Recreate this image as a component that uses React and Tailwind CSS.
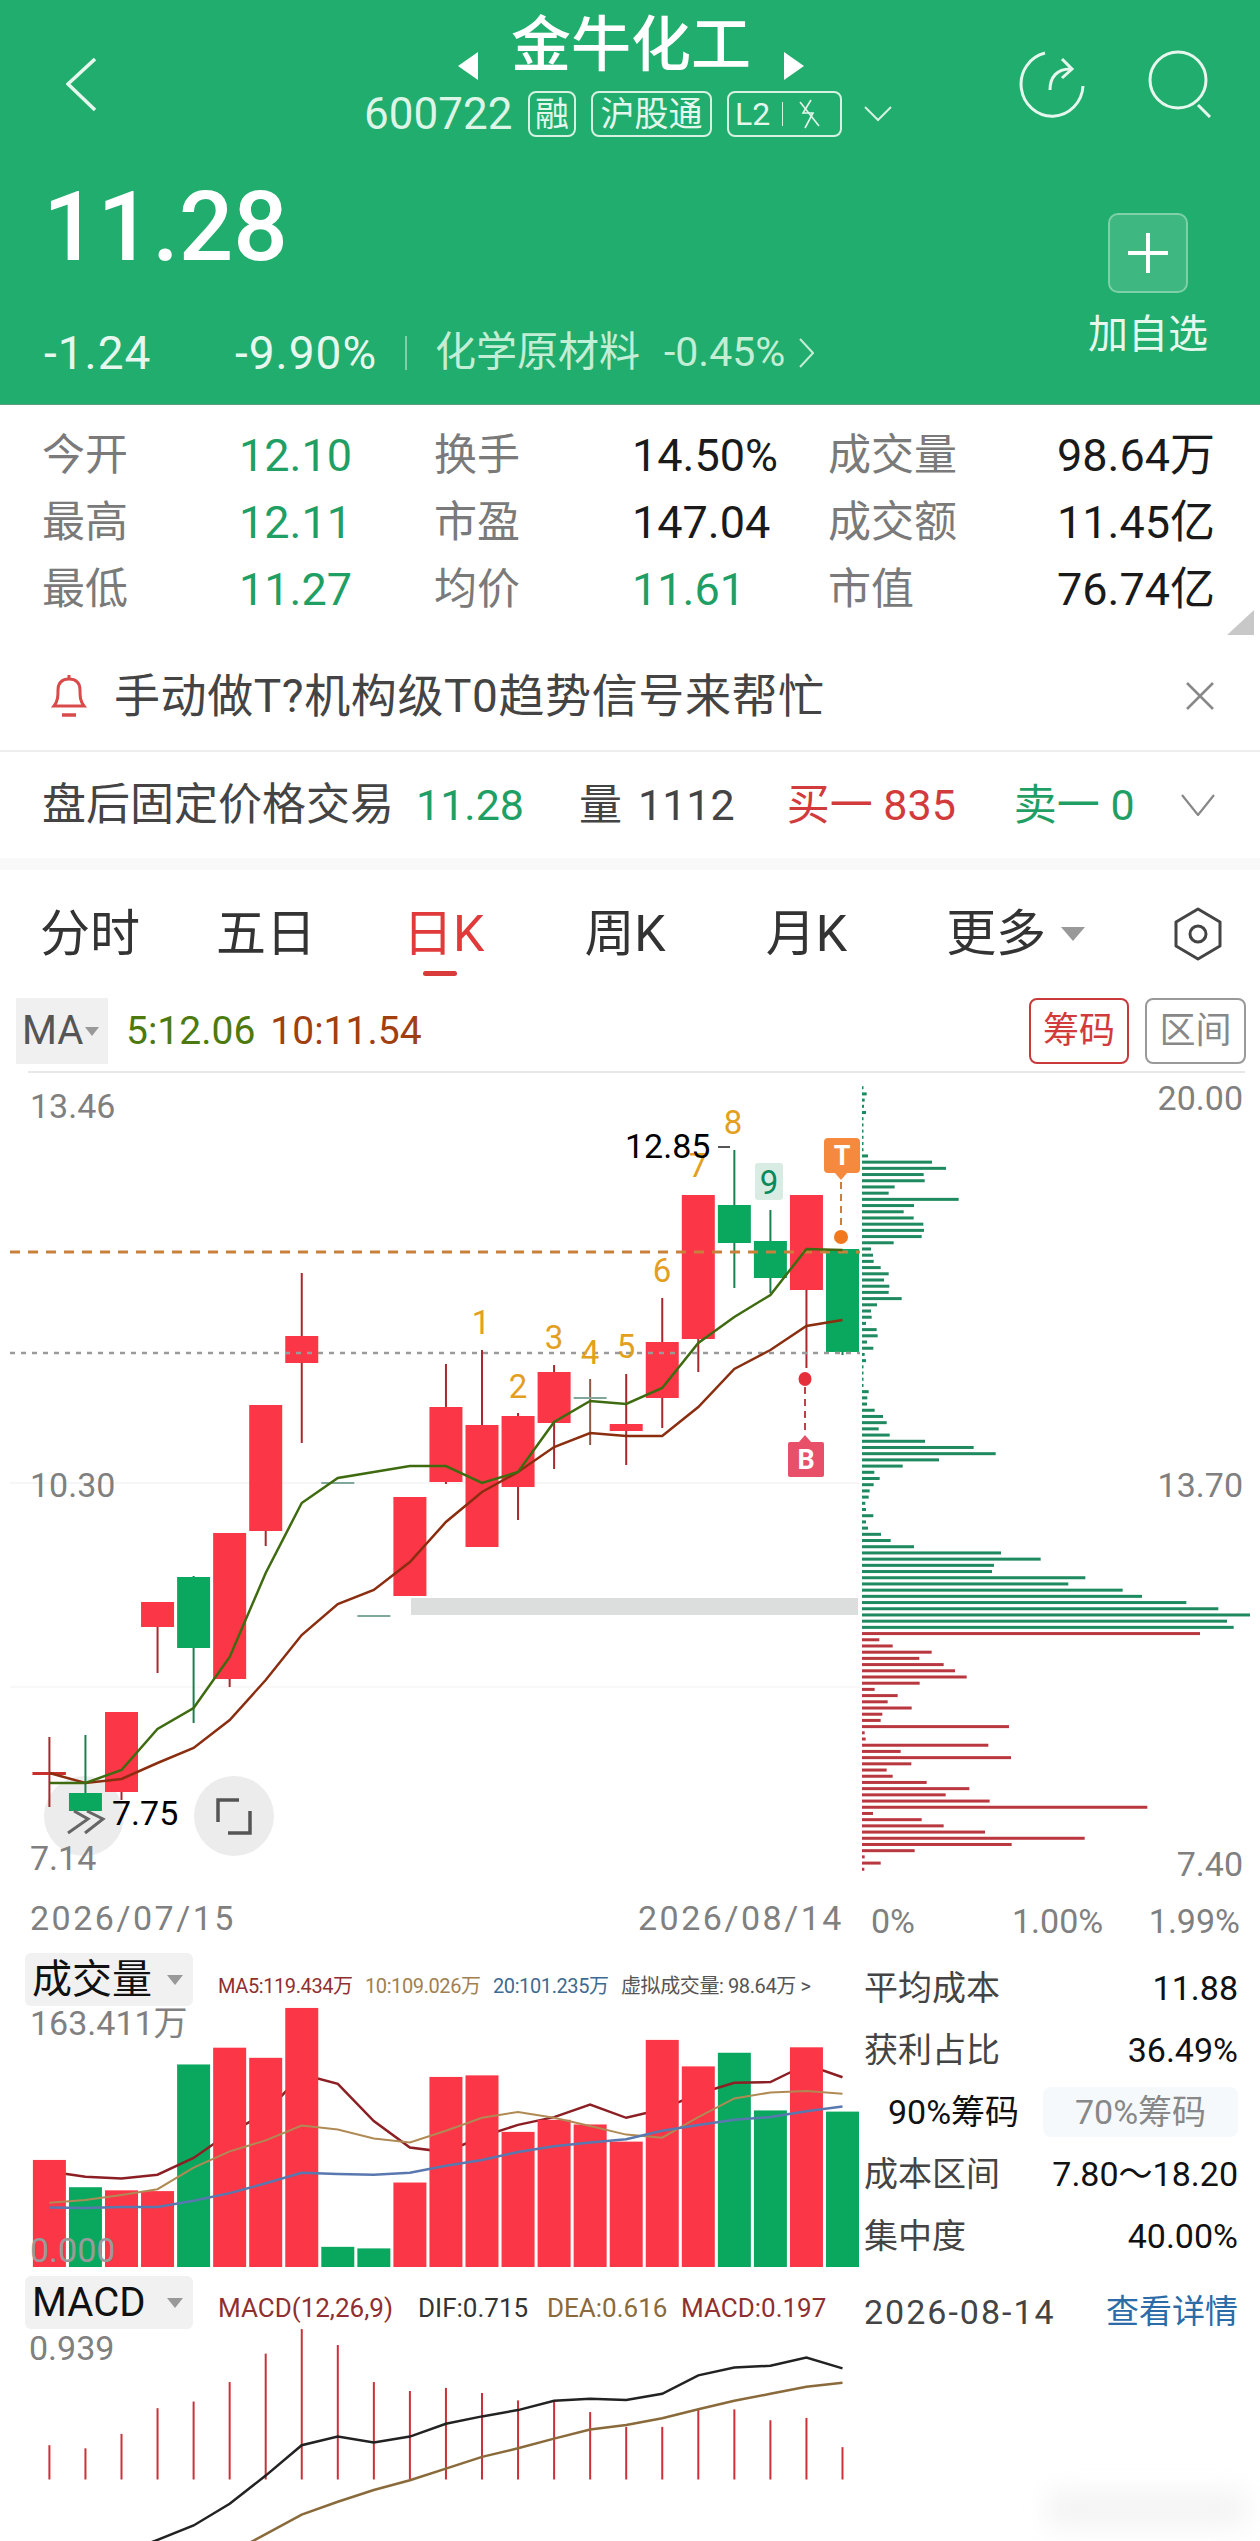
const RED = '#fb3647'
const GREEN = '#0aa85f'
const slotX = (i) => 49.4 + 36.05 * i
const line = (ys, start = 0) => ys.map((y, i) => `${slotX(i + start).toFixed(1)},${y.toFixed(1)}`).join(' ')

// [bodyTop, bodyBottom, wickTop, wickBottom, colour]
const candles = [
  [1772, 1775, 1737, 1807, 'r'],
  [1793, 1811, 1735, 1793, 'g'],
  [1712, 1792, 1712, 1800, 'r'],
  [1602, 1627, 1602, 1673, 'r'],
  [1577, 1648, 1576, 1723, 'g'],
  [1533, 1679, 1533, 1687, 'r'],
  [1405, 1531, 1405, 1546, 'r'],
  [1336, 1363, 1273, 1443, 'r'],
  [1482, 1484, 1482, 1484, 'd'],
  [1615, 1617, 1615, 1617, 'd'],
  [1497, 1596, 1497, 1596, 'r'],
  [1407, 1482, 1364, 1484, 'r'],
  [1425, 1547, 1350, 1547, 'r'],
  [1416, 1487, 1413, 1520, 'r'],
  [1372, 1423, 1365, 1469, 'r'],
  [1397, 1399, 1379, 1445, 'd'],
  [1424, 1431, 1374, 1465, 'r'],
  [1342, 1398, 1298, 1428, 'r'],
  [1195, 1339, 1195, 1372, 'r'],
  [1205, 1243, 1150, 1288, 'g'],
  [1241, 1278, 1210, 1293, 'g'],
  [1195, 1290, 1195, 1368, 'r'],
  [1249, 1352, 1249, 1355, 'g'],
]

const ma5 = [1783, 1783, 1770, 1729, 1708, 1657, 1573, 1503, 1478, 1472, 1466, 1466, 1483, 1472, 1422, 1401, 1404, 1388, 1343, 1317, 1295, 1249, 1250]
const ma10 = [1773, 1783, 1779, 1763, 1748, 1720, 1680, 1635, 1604, 1590, 1562, 1522, 1492, 1472, 1447, 1433, 1436, 1436, 1407, 1369, 1350, 1326, 1320]

// bar lengths of the chip distribution, top to bottom
const chipsGreen = [3, 14, 8, 6, 12, 3, 3, 3, 3, 3, 3, 18, 210, 252, 185, 188, 98, 80, 290, 156, 125, 155, 184, 186, 179, 95, 27, 33, 35, 56, 80, 66, 82, 80, 119, 45, 27, 29, 12, 44, 47, 15, 34, 8, 12, 3, 3, 3, 3, 20, 16, 15, 38, 63, 74, 50, 83, 189, 335, 401, 231, 122, 37, 53, 35, 23, 20, 10, 12, 34, 12, 18, 57, 86, 156, 417, 536, 396, 390, 670, 619, 782, 840, 973, 1069, 1164, 1095, 1115]
const chipsRed = [1014, 52, 92, 209, 172, 245, 279, 314, 173, 38, 107, 77, 149, 61, 56, 441, 8, 11, 379, 116, 447, 148, 74, 92, 194, 322, 251, 383, 856, 33, 179, 245, 369, 668, 449, 158, 8, 56, 7]

// volume panel, read off the picture
const volY = (z) => 1930 + z / 2.566
const volBars = [
  [590, 'r'], [660, 'g'], [668, 'r'], [670, 'r'], [345, 'g'], [302, 'r'], [328, 'r'], [200, 'r'],
  [813, 'g'], [817, 'g'], [648, 'r'], [377, 'r'], [373, 'r'], [518, 'r'], [487, 'r'], [499, 'r'],
  [543, 'r'], [282, 'r'], [350, 'r'], [315, 'g'], [463, 'g'], [301, 'r'], [466, 'g'],
]
const volMa5 = [620, 633, 638, 628, 585, 520, 470, 370, 395, 490, 558, 570, 530, 500, 480, 448, 482, 460, 420, 392, 390, 345, 378].map(volY)
const volMa10 = [700, 693, 680, 665, 610, 568, 540, 502, 512, 535, 545, 515, 482, 467, 482, 503, 525, 533, 480, 432, 417, 413, 420].map(volY)
const volMa20 = [712, 713, 711, 711, 695, 675, 650, 623, 626, 628, 623, 605, 590, 570, 555, 545, 537, 515, 500, 487, 480, 465, 453].map(volY)

const macdBars = [1322, 1330, 1293, 1227, 1210, 1160, 1087, 1024, 1065, 1160, 1183, 1175, 1188, 1207, 1210, 1237, 1275, 1275, 1230, 1230, 1258, 1252, 1327]
const dif = [1600, 1565, 1528, 1472, 1400, 1322, 1300, 1315, 1300, 1267, 1248, 1232, 1208, 1203, 1206, 1190, 1143, 1123, 1118, 1097, 1125].map(volY)
const dea = [1600, 1550, 1500, 1467, 1437, 1412, 1382, 1352, 1330, 1305, 1282, 1270, 1253, 1230, 1208, 1190, 1172, 1162].map(volY)

const stats = [
  ['今开', '12.10', '换手', '14.50%', '成交量', '98.64万'],
  ['最高', '12.11', '市盈', '147.04', '成交额', '11.45亿'],
  ['最低', '11.27', '均价', '11.61', '市值', '76.74亿'],
]

function Badge({ className, children }) {
  return (
    <div className={`h-[46px] flex items-center justify-center border-2 border-[#d5f2e2] rounded-lg text-[34px] text-[#e3f7ec] ${className}`}>
      {children}
    </div>
  )
}

function Header() {
  return (
    <header className="h-[405px] bg-[#21ad6d] border-b border-[#5f9f80] text-[#e6f7ee]">
      <div className="grid grid-cols-[364px_528px_368px] h-[137px]">
        <div className="pl-[66px] pt-[58px]">
          <svg width="30" height="54" viewBox="0 0 30 54" fill="none" stroke="#e6f7ee" strokeWidth="3.5">
            <polyline points="29,1 2,26 29,52" />
          </svg>
        </div>
        <div>
          <div className="flex items-end justify-center gap-[33px] pt-[16px] h-[76px] pl-[6px]">
            <div className="w-0 h-0 mb-[-4px] border-y-[14px] border-y-transparent border-r-[20px] border-r-white" />
            <div className="text-[60px] leading-[60px] font-medium text-white">金牛化工</div>
            <div className="w-0 h-0 mb-[-4px] border-y-[14px] border-y-transparent border-l-[20px] border-l-white" />
          </div>
          <div className="flex items-center mt-[15px]">
            <span className="text-[44px] leading-[46px] w-[164px] text-[#dcf5e7]">600722</span>
            <Badge className="w-[48px]">融</Badge>
            <Badge className="w-[121px] ml-[15px]">沪股通</Badge>
            <Badge className="w-[115px] ml-[15px] justify-start pl-[6px]">
              <span className="text-[32px]">L2</span>
              <span className="w-px h-[24px] bg-[#d5f2e2] ml-[12px] mr-[13px]" />
              <svg width="26" height="30" viewBox="0 0 26 30" fill="none" stroke="#e3f7ec" strokeWidth="1.6">
                <path d="M15 1 L7 14 L17 14 L9 29" />
                <path d="M4 3 L23 27" />
              </svg>
            </Badge>
            <svg className="ml-[22px]" width="28" height="16" viewBox="0 0 28 16" fill="none" stroke="#d5f2e2" strokeWidth="2">
              <polyline points="1,1 14,14 27,1" />
            </svg>
          </div>
        </div>
        <div className="flex items-start pl-[125px] pt-[50px]">
          <svg width="68" height="68" viewBox="0 0 68 68" fill="none" stroke="#e6f7ee" strokeWidth="3">
            <path d="M28 3 A31 32 0 1 0 66 36" />
            <path d="M33 40 C33 27 40 19 53 19" />
            <path d="M45 9 L55 19 L45 28" />
          </svg>
          <svg className="ml-[63px]" width="64" height="68" viewBox="0 0 64 68" fill="none" stroke="#e6f7ee" strokeWidth="3">
            <circle cx="30" cy="30" r="28" />
            <path d="M50 55 L62 67" />
          </svg>
        </div>
      </div>
      <div className="flex justify-between pl-[46px] pr-[52px]">
        <div>
          <div className="text-[96px] leading-[96px] font-medium text-white mt-[42px] -ml-[3px]">11.28</div>
          <div className="flex items-center h-[50px] mt-[53px]">
            <span className="text-[46px] w-[191px] -ml-[2px] tracking-[1px]">-1.24</span>
            <span className="text-[46px] w-[170px] tracking-[1px]">-9.90%</span>
            <span className="w-[2px] h-[34px] bg-[#7fd0a8]" />
            <span className="text-[41px] ml-[28px] text-[#c2eed6]">化学原材料</span>
            <span className="text-[41px] ml-[24px] text-[#c2eed6]">-0.45%</span>
            <svg className="ml-[14px]" width="15" height="30" viewBox="0 0 15 30" fill="none" stroke="#c2eed6" strokeWidth="2">
              <polyline points="1,1 14,15 1,29" />
            </svg>
          </div>
        </div>
        <div className="w-[120px] flex flex-col items-center pt-[76px]">
          <div className="w-[80px] h-[80px] rounded-[10px] border-2 border-[#7ed0a8] bg-[#3eb880] flex items-center justify-center">
            <svg width="42" height="42" viewBox="0 0 42 42" stroke="#ffffff" strokeWidth="4">
              <path d="M21 1 V41 M1 21 H41" />
            </svg>
          </div>
          <div className="text-[40px] leading-[50px] mt-[17px] whitespace-nowrap">加自选</div>
        </div>
      </div>
    </header>
  )
}

function Stats() {
  return (
    <section className="relative pt-[17px] pl-[42px] h-[218px]">
      <div className="grid grid-cols-[199px_193px_199px_195px_150px_237px] auto-rows-[67px] items-center text-[45px]">
        {stats.map(([a, b, c, d, e, f]) => (
          <div className="contents" key={a}>
            <span className="text-[43px] text-[#7a7a7a]">{a}</span>
            <span className="-ml-[2px] text-[#1f9f64]">{b}</span>
            <span className="text-[43px] text-[#7a7a7a]">{c}</span>
            <span className={d === '11.61' ? '-ml-[1px] text-[#1f9f64]' : '-ml-[1px] text-[#1a1a1a]'}>{d}</span>
            <span className="text-[43px] text-[#7a7a7a] whitespace-nowrap">{e}</span>
            <span className="text-right text-[#1a1a1a] whitespace-nowrap">{f}</span>
          </div>
        ))}
      </div>
      <div className="absolute right-[6px] bottom-[-12px] w-0 h-0 border-b-[25px] border-b-[#c8c8c8] border-l-[27px] border-l-transparent" />
    </section>
  )
}

function Notice() {
  return (
    <div className="h-[129px] pt-[19px] border-b-2 border-[#eeeeee] flex items-center pl-[50px] pr-[46px]">
      <svg width="38" height="44" viewBox="0 0 38 44" fill="none" stroke="#d94a4a" strokeWidth="3">
        <path d="M4 32 C8 27 8 22 8 16 C8 9 12 5 19 5 C26 5 30 9 30 16 C30 22 30 27 34 32 Z" />
        <path d="M19 1 V5" />
        <path d="M12 41 H26" strokeWidth="3.5" />
      </svg>
      <span className="text-[46px] tracking-[0.6px] text-[#444444] ml-[26px]">手动做T?机构级T0趋势信号来帮忙</span>
      <svg className="ml-auto" width="28" height="28" viewBox="0 0 28 28" stroke="#888888" strokeWidth="2.5">
        <path d="M1 1 L27 27 M27 1 L1 27" />
      </svg>
    </div>
  )
}

function AfterHours() {
  return (
    <div className="h-[106px] flex items-center pl-[42px] pr-[45px] text-[43px] text-[#444444] whitespace-nowrap">
      <span className="text-[44px]">盘后固定价格交易</span>
      <span className="ml-[22px] text-[#1f9f64]">11.28</span>
      <span className="ml-[55px]">量</span>
      <span className="ml-[16px]">1112</span>
      <span className="ml-[52px] text-[#d23b3b]">买一 835</span>
      <span className="ml-[58px] text-[#1f9f64]">卖一 0</span>
      <svg className="ml-auto" width="34" height="22" viewBox="0 0 34 22" fill="none" stroke="#888888" strokeWidth="2.2">
        <polyline points="1,1 17,21 33,1" />
      </svg>
    </div>
  )
}

function Tabs() {
  return (
    <div className="h-[140px] flex items-center pl-[40px] text-[50px] text-[#333333] border-t-[12px] border-[#f9f9f9] whitespace-nowrap">
      <span>分时</span>
      <span className="ml-[76px]">五日</span>
      <span className="ml-[87px] relative text-[#e03a3a]">
        日K
        <span className="absolute left-[20px] top-[74px] w-[34px] h-[5px] rounded-full bg-[#d93a3a]" />
      </span>
      <span className="ml-[100px]">周K</span>
      <span className="ml-[100px]">月K</span>
      <span className="ml-[99px]">更多</span>
      <div className="ml-[15px] w-0 h-0 border-x-[12px] border-x-transparent border-t-[14px] border-t-[#999999]" />
      <svg className="ml-[89px]" width="48" height="54" viewBox="0 0 48 54" fill="none" stroke="#444444" strokeWidth="3">
        <path d="M24 2 L46 15 V39 L24 52 L2 39 V15 Z" strokeLinejoin="round" />
        <circle cx="24" cy="27" r="8" />
      </svg>
    </div>
  )
}

function MaRow() {
  return (
    <div className="h-[66px] flex items-center pl-[16px] pr-[14px] whitespace-nowrap">
      <div className="w-[92px] h-full bg-[#f0f0f0] flex items-center pl-[6px] text-[40px] text-[#555555]">
        MA
        <div className="ml-[2px] w-0 h-0 border-x-[7px] border-x-transparent border-t-[9px] border-t-[#999999]" />
      </div>
      <span className="ml-[18px] text-[39px] text-[#4d7a0e]">5:12.06</span>
      <span className="ml-[15px] text-[39px] text-[#a04010]">10:11.54</span>
      <div className="ml-auto w-[100px] h-full flex items-center justify-center border-2 border-[#c83a3a] rounded-lg text-[36px] text-[#d23b3b]">筹码</div>
      <div className="ml-[16px] w-[101px] h-full flex items-center justify-center border-2 border-[#999999] rounded-lg text-[36px] text-[#888888]">区间</div>
    </div>
  )
}

function AxisText({ x, y, anchor = 'start', size = 34, fill = '#808080', spacing = 0, children }) {
  return (
    <text x={x} y={y} textAnchor={anchor} dominantBaseline="central" fontSize={size} fill={fill} letterSpacing={spacing}>
      {children}
    </text>
  )
}

function KChart() {
  return (
    <svg className="block overflow-visible" width="1260" height="874" viewBox="0 1071 1260 874">
      <line x1="28" x2="1245" y1="1072" y2="1072" stroke="#e8e8e8" strokeWidth="2" />
      <line x1="10" x2="860" y1="1483" y2="1483" stroke="#f6f6f6" strokeWidth="2" />
      <line x1="10" x2="860" y1="1687" y2="1687" stroke="#f8f8f8" strokeWidth="2" />
      <rect x="411" y="1598" width="447" height="17" fill="#dcdedd" />
      <circle cx="84" cy="1816" r="40" fill="#ececec" />

      {candles.map(([top, bottom, wt, wb, c], i) => {
        const x = slotX(i)
        const body = c === 'g' ? GREEN : c === 'r' ? RED : '#7fa89a'
        const wick = c === 'g' ? '#1a8050' : c === 'r' ? '#a8282e' : '#8a5a4a'
        return (
          <g key={i}>
            <line x1={x} x2={x} y1={wt} y2={wb} stroke={wick} strokeWidth="2" />
            <rect x={x - 16.5} y={top} width="33" height={bottom - top} fill={body} />
          </g>
        )
      })}
      <rect x="32.5" y="1772" width="33" height="3" fill="#c83030" />

      <line x1="10" x2="860" y1="1252" y2="1252" stroke="#c9803a" strokeWidth="3" strokeDasharray="10 8" />
      <line x1="10" x2="860" y1="1353" y2="1353" stroke="#9a9a9a" strokeWidth="2.5" strokeDasharray="5 6" />

      <polyline points={line(ma10)} fill="none" stroke="#8b2e10" strokeWidth="2.5" />
      <polyline points={line(ma5)} fill="none" stroke="#3f6b10" strokeWidth="2.5" />

      <rect x="755" y="1163" width="28" height="37" rx="3" fill="#d8ece4" />
      {[['1', 481, 1322], ['2', 518, 1386], ['3', 554, 1337], ['4', 590, 1352], ['5', 626, 1346], ['6', 662, 1270], ['7', 698, 1165], ['8', 733, 1122]].map(([n, x, y]) => (
        <AxisText key={n} x={x} y={y} anchor="middle" size={33} fill="#e3a020">{n}</AxisText>
      ))}
      <AxisText x={769} y={1182} anchor="middle" size={33} fill="#0a8a5a">9</AxisText>
      <AxisText x={625} y={1146} size={34} fill="#000000">12.85</AxisText>
      <line x1="718" x2="730" y1="1147" y2="1147" stroke="#555555" strokeWidth="2" />

      {/* T / B signal flags */}
      <line x1="841" x2="841" y1="1182" y2="1228" stroke="#c9803a" strokeWidth="2" strokeDasharray="7 5" />
      <path d="M828 1138 H856 Q860 1138 860 1142 V1169 Q860 1173 856 1173 H847 L841 1180 L835 1173 H828 Q824 1173 824 1169 V1142 Q824 1138 828 1138 Z" fill="#f58a3f" />
      <text x="842" y="1156" textAnchor="middle" dominantBaseline="central" fontSize="27" fontWeight="700" fill="#ffffff">T</text>
      <ellipse cx="841" cy="1237" rx="7" ry="7" fill="#f0781e" />
      <ellipse cx="805" cy="1379" rx="6.5" ry="7" fill="#e5303c" />
      <line x1="805" x2="805" y1="1387" y2="1434" stroke="#c0404a" strokeWidth="2" strokeDasharray="7 5" />
      <path d="M790 1442 H799 L805 1435 L811 1442 H822 Q824 1442 824 1444 V1475 Q824 1477 822 1477 H790 Q788 1477 788 1475 V1444 Q788 1442 790 1442 Z" fill="#e8506a" />
      <text x="806" y="1460" textAnchor="middle" dominantBaseline="central" fontSize="27" fontWeight="700" fill="#ffffff">B</text>

      {/* overlay buttons */}
      <circle cx="234" cy="1816" r="40" fill="#ececec" />
      <path d="M74 1811 L88 1819 L68 1833 M87 1811 L103 1819 L85 1833" fill="none" stroke="#666666" strokeWidth="3" />
      <path d="M218 1822 V1800 H239 M250 1811 V1833 H228" fill="none" stroke="#555555" strokeWidth="3.5" />
      <AxisText x={112} y={1813} fill="#000000">7.75</AxisText>

      <AxisText x={30} y={1106}>13.46</AxisText>
      <AxisText x={30} y={1485}>10.30</AxisText>
      <AxisText x={30} y={1858}>7.14</AxisText>
      <AxisText x={30} y={1918} spacing={2.5}>2026/07/15</AxisText>
      <AxisText x={638} y={1918} spacing={2.5}>2026/08/14</AxisText>

      {/* chip distribution */}
      {[...chipsGreen, ...chipsRed].map((len, i) => (
        <rect
          key={i}
          x="862"
          y={1060 + (48 + 10.75 * i) / 1.733 - 1.5}
          width={Math.max(len / 3, 1.5)}
          height="3"
          fill={i < chipsGreen.length ? '#1f8a5f' : '#b93840'}
        />
      ))}
      <AxisText x={1243} y={1098} anchor="end">20.00</AxisText>
      <AxisText x={1243} y={1485} anchor="end">13.70</AxisText>
      <AxisText x={1243} y={1864} anchor="end">7.40</AxisText>
      <AxisText x={871} y={1921}>0%</AxisText>
      <AxisText x={1012} y={1921}>1.00%</AxisText>
      <AxisText x={1240} y={1921} anchor="end">1.99%</AxisText>
    </svg>
  )
}

function PanelLegend({ title, children }) {
  return (
    <div className="relative z-10 flex h-[53px] pl-[25px] whitespace-nowrap">
      <div className="w-[168px] h-full bg-[#f0f1f0] rounded-md flex items-center pl-[7px] text-[40px] text-[#111111]">
        <span className="w-[135px]">{title}</span>
        <div className="w-0 h-0 border-x-[8px] border-x-transparent border-t-[10px] border-t-[#999999]" />
      </div>
      {children}
    </div>
  )
}

function VolumeChart() {
  return (
    <svg className="block overflow-visible" width="860" height="270" viewBox="0 2006 860 270">
      {volBars.map(([z, c], i) => c === 'g' && (
        <rect key={i} x={slotX(i) - 16.5} y={volY(z)} width="33" height={2267 - volY(z)} fill={GREEN} />
      ))}
      <polyline points={line(volMa5)} fill="none" stroke="#8b1f24" strokeWidth="2.5" />
      {volBars.map(([z, c], i) => c === 'r' && (
        <rect key={i} x={slotX(i) - 16.5} y={volY(z)} width="33" height={2267 - volY(z)} fill={RED} />
      ))}
      <polyline points={line(volMa10)} fill="none" stroke="#b08a55" strokeWidth="2" />
      <polyline points={line(volMa20)} fill="none" stroke="#5a78b0" strokeWidth="2.5" />
      <AxisText x={30} y={2023}>163.411万</AxisText>
      <AxisText x={30} y={2250} fill="#9a9a9a">0.000</AxisText>
    </svg>
  )
}

function MacdChart() {
  return (
    <svg className="block overflow-visible" width="860" height="212" viewBox="0 2329 860 212">
      {macdBars.map((z, i) => (
        <line key={i} x1={slotX(i)} x2={slotX(i)} y1={volY(z)} y2={2479.5} stroke="#cc3038" strokeWidth="2" />
      ))}
      <polyline points={line(dif, 2)} fill="none" stroke="#222222" strokeWidth="2.5" />
      <polyline points={line(dea, 5)} fill="none" stroke="#8a6a3a" strokeWidth="2.5" />
      <AxisText x={29} y={2348}>0.939</AxisText>
    </svg>
  )
}

function ChipStats() {
  const row = 'h-[62px] flex items-center justify-between'
  return (
    <div className="w-[400px] pl-[4px] pr-[22px] pt-[12px] text-[34px] text-[#444444] whitespace-nowrap">
      <div className={row}><span>平均成本</span><span className="text-[#111111]">11.88</span></div>
      <div className={row}><span>获利占比</span><span className="text-[#111111]">36.49%</span></div>
      <div className="h-[62px] grid grid-cols-[179px_195px] items-center text-center">
        <span className="text-[#111111]">90%筹码</span>
        <span className="h-[50px] leading-[50px] bg-[#f5f9fb] rounded-lg text-[#888888]">70%筹码</span>
      </div>
      <div className={row}><span>成本区间</span><span className="text-[#111111]">7.80～18.20</span></div>
      <div className={row}><span>集中度</span><span className="text-[#111111]">40.00%</span></div>
      <div className={`${row} mt-[14px]`}><span className="tracking-[2px]">2026-08-14</span><span className="text-[33px] text-[#2a6ba8]">查看详情</span></div>
    </div>
  )
}

export default function App() {
  return (
    <div className="relative w-[1260px] h-[2541px] overflow-hidden bg-white font-['Roboto','Noto_Sans_CJK_SC',sans-serif]">
      <Header />
      <Stats />
      <Notice />
      <AfterHours />
      <Tabs />
      <MaRow />
      <div className="mt-[7px]">
        <KChart />
      </div>
      <div className="flex">
        <div className="w-[860px] pt-[8px]">
          <PanelLegend title="成交量">
            <div className="pl-[25px] pt-[13px] text-[20px] leading-[40px] flex tracking-[-0.4px]">
              <span className="text-[#8f2f2f] w-[147px]">MA5:119.434万</span>
              <span className="text-[#a08050] w-[128px]">10:109.026万</span>
              <span className="text-[#3f6a8f] w-[128px]">20:101.235万</span>
              <span className="text-[#555555]">虚拟成交量: 98.64万 &gt;</span>
            </div>
          </PanelLegend>
          <VolumeChart />
          <PanelLegend title="MACD">
            <div className="pl-[25px] pt-[12px] text-[26px] leading-[40px] flex">
              <span className="text-[#8f2f2f] w-[200px]">MACD(12,26,9)</span>
              <span className="text-[#333333] w-[129px]">DIF:0.715</span>
              <span className="text-[#8a6a3a] w-[134px]">DEA:0.616</span>
              <span className="text-[#8f2f2f]">MACD:0.197</span>
            </div>
          </PanelLegend>
          <MacdChart />
        </div>
        <ChipStats />
      </div>
      <div className="absolute left-[1047px] top-[2490px] w-[200px] h-[38px] rounded-lg bg-[#f4f4f4] blur-md" />
    </div>
  )
}
